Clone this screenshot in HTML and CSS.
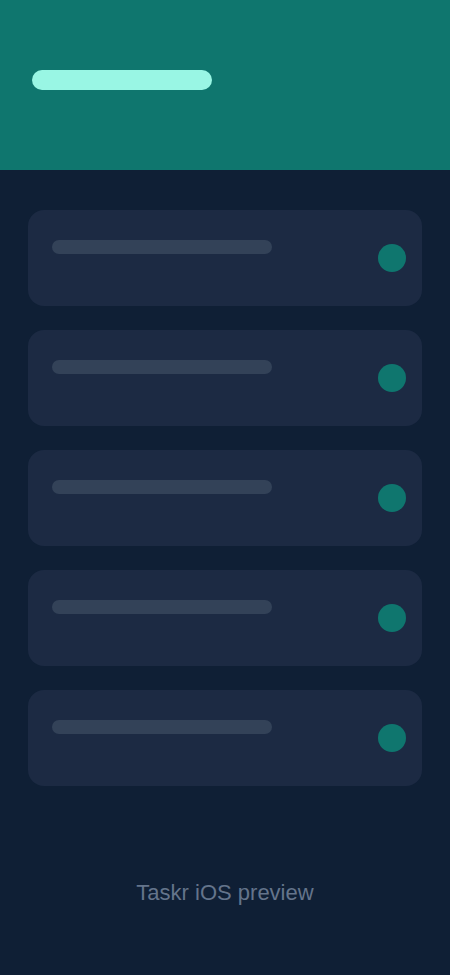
FILE: index.html
```html
<!DOCTYPE html>
<html lang="en">
<head>
    <meta charset="UTF-8">
    <meta name="viewport" content="width=device-width, initial-scale=1.0">
    <title>Taskr</title>
    <link rel="stylesheet" href="styles.css">
</head>
<body>
    <header class="header">
        <div class="header-title"></div>
    </header>
    <main class="task-list">
        <div class="task-card">
            <div class="task-line"></div>
            <div class="task-dot"></div>
        </div>
        <div class="task-card">
            <div class="task-line"></div>
            <div class="task-dot"></div>
        </div>
        <div class="task-card">
            <div class="task-line"></div>
            <div class="task-dot"></div>
        </div>
        <div class="task-card">
            <div class="task-line"></div>
            <div class="task-dot"></div>
        </div>
        <div class="task-card">
            <div class="task-line"></div>
            <div class="task-dot"></div>
        </div>
    </main>
    <footer class="footer">Taskr iOS preview</footer>
</body>
</html>
```

FILE: styles.css
```css
html, body {
    margin: 0;
    padding: 0;
}
body {
    background-color: #0f1f35;
    font-family: 'Liberation Sans', Arial, sans-serif;
    min-height: 975px;
}
.header {
    height: 170px;
    background-color: #0f766e;
    padding: 70px 32px 0;
    box-sizing: border-box;
}
.header-title {
    width: 180px;
    height: 20px;
    border-radius: 10px;
    background-color: #99f6e4;
}
.task-list {
    display: flex;
    flex-direction: column;
    gap: 24px;
    padding: 40px 28px 0;
}
.task-card {
    display: flex;
    justify-content: space-between;
    align-items: center;
    height: 96px;
    box-sizing: border-box;
    padding: 0 16px 0 24px;
    background-color: #1c2a43;
    border-radius: 16px;
}
.task-line {
    align-self: flex-start;
    margin-top: 30px;
    width: 220px;
    height: 14px;
    border-radius: 7px;
    background-color: #334258;
}
.task-dot {
    width: 28px;
    height: 28px;
    border-radius: 50%;
    background-color: #0f766e;
}
.footer {
    padding-top: 94px;
    text-align: center;
    font-size: 22px;
    line-height: 1.15;
    color: #64748b;
}
```
